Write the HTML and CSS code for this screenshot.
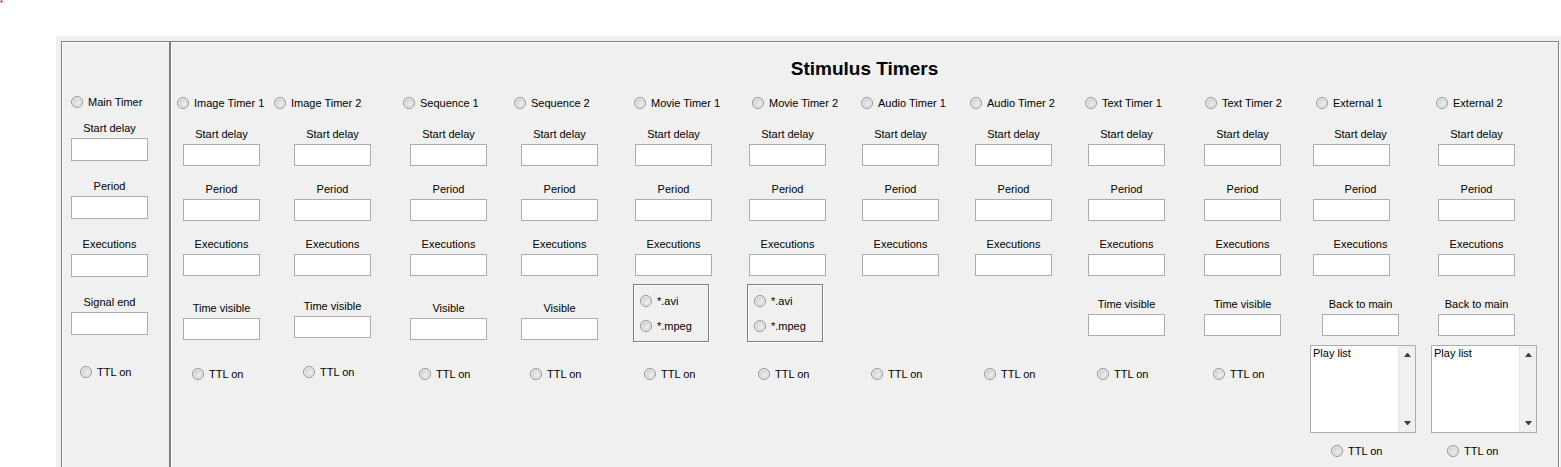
FILE: index.html
```html
<!DOCTYPE html>
<html lang="en">
<head>
<meta charset="utf-8">
<title>Stimulus Timers</title>
<link rel="stylesheet" href="styles.css">
</head>
<body>
<div class="top-strip">
  <svg class="mark" viewBox="0 0 3 3" aria-hidden="true"><path d="M0 0h3v3H0z" fill="#fbd0d0"/><path d="M0 1h3v1H0z" fill="#f08080"/><path d="M1 0h1v3H1z" fill="#f08080"/><path d="M1 1h1v1H1z" fill="#e02020"/></svg>
</div>
<div class="app">
  <section class="panel main-panel">
    <label class="radio"><input type="radio" name="main"><span>Main Timer</span></label>
    <div class="fields">
      <label class="field"><span>Start delay</span><input type="text"></label>
      <label class="field"><span>Period</span><input type="text"></label>
      <label class="field"><span>Executions</span><input type="text"></label>
      <label class="field"><span>Signal end</span><input type="text"></label>
    </div>
    <label class="radio ttl"><input type="radio" name="ttl-main"><span>TTL on</span></label>
  </section>

  <section class="panel stimulus-panel">
    <h1 class="title">Stimulus Timers</h1>
    <div class="timer-names">
      <label class="radio"><input type="radio" name="image1"><span>Image Timer 1</span></label>
      <label class="radio"><input type="radio" name="image2"><span>Image Timer 2</span></label>
      <label class="radio"><input type="radio" name="sequence1"><span>Sequence 1</span></label>
      <label class="radio"><input type="radio" name="sequence2"><span>Sequence 2</span></label>
      <label class="radio"><input type="radio" name="movie1"><span>Movie Timer 1</span></label>
      <label class="radio"><input type="radio" name="movie2"><span>Movie Timer 2</span></label>
      <label class="radio"><input type="radio" name="audio1"><span>Audio Timer 1</span></label>
      <label class="radio"><input type="radio" name="audio2"><span>Audio Timer 2</span></label>
      <label class="radio"><input type="radio" name="text1"><span>Text Timer 1</span></label>
      <label class="radio"><input type="radio" name="text2"><span>Text Timer 2</span></label>
      <label class="radio"><input type="radio" name="external1"><span>External 1</span></label>
      <label class="radio"><input type="radio" name="external2"><span>External 2</span></label>
    </div>
    <div class="timers">
      <div class="timer">
        <div class="fields">
          <label class="field"><span>Start delay</span><input type="text"></label>
          <label class="field"><span>Period</span><input type="text"></label>
          <label class="field"><span>Executions</span><input type="text"></label>
        </div>
        <div class="extra visible">
          <label class="field"><span>Time visible</span><input type="text"></label>
        </div>
        <label class="radio ttl"><input type="radio" name="ttl-image1"><span>TTL on</span></label>
      </div>
      <div class="timer">
        <div class="fields">
          <label class="field"><span>Start delay</span><input type="text"></label>
          <label class="field"><span>Period</span><input type="text"></label>
          <label class="field"><span>Executions</span><input type="text"></label>
        </div>
        <div class="extra visible raised">
          <label class="field"><span>Time visible</span><input type="text"></label>
        </div>
        <label class="radio ttl"><input type="radio" name="ttl-image2"><span>TTL on</span></label>
      </div>
      <div class="timer">
        <div class="fields">
          <label class="field"><span>Start delay</span><input type="text"></label>
          <label class="field"><span>Period</span><input type="text"></label>
          <label class="field"><span>Executions</span><input type="text"></label>
        </div>
        <div class="extra visible">
          <label class="field"><span>Visible</span><input type="text"></label>
        </div>
        <label class="radio ttl"><input type="radio" name="ttl-sequence1"><span>TTL on</span></label>
      </div>
      <div class="timer">
        <div class="fields">
          <label class="field"><span>Start delay</span><input type="text"></label>
          <label class="field"><span>Period</span><input type="text"></label>
          <label class="field"><span>Executions</span><input type="text"></label>
        </div>
        <div class="extra visible">
          <label class="field"><span>Visible</span><input type="text"></label>
        </div>
        <label class="radio ttl"><input type="radio" name="ttl-sequence2"><span>TTL on</span></label>
      </div>
      <div class="timer">
        <div class="fields">
          <label class="field"><span>Start delay</span><input type="text"></label>
          <label class="field"><span>Period</span><input type="text"></label>
          <label class="field"><span>Executions</span><input type="text"></label>
        </div>
        <div class="extra movie">
          <div class="formats">
            <label class="radio"><input type="radio" name="format1"><span>*.avi</span></label>
            <label class="radio"><input type="radio" name="format1"><span>*.mpeg</span></label>
          </div>
        </div>
        <label class="radio ttl"><input type="radio" name="ttl-movie1"><span>TTL on</span></label>
      </div>
      <div class="timer">
        <div class="fields">
          <label class="field"><span>Start delay</span><input type="text"></label>
          <label class="field"><span>Period</span><input type="text"></label>
          <label class="field"><span>Executions</span><input type="text"></label>
        </div>
        <div class="extra movie">
          <div class="formats">
            <label class="radio"><input type="radio" name="format2"><span>*.avi</span></label>
            <label class="radio"><input type="radio" name="format2"><span>*.mpeg</span></label>
          </div>
        </div>
        <label class="radio ttl"><input type="radio" name="ttl-movie2"><span>TTL on</span></label>
      </div>
      <div class="timer">
        <div class="fields">
          <label class="field"><span>Start delay</span><input type="text"></label>
          <label class="field"><span>Period</span><input type="text"></label>
          <label class="field"><span>Executions</span><input type="text"></label>
        </div>
        <div class="extra"></div>
        <label class="radio ttl"><input type="radio" name="ttl-audio1"><span>TTL on</span></label>
      </div>
      <div class="timer">
        <div class="fields">
          <label class="field"><span>Start delay</span><input type="text"></label>
          <label class="field"><span>Period</span><input type="text"></label>
          <label class="field"><span>Executions</span><input type="text"></label>
        </div>
        <div class="extra"></div>
        <label class="radio ttl"><input type="radio" name="ttl-audio2"><span>TTL on</span></label>
      </div>
      <div class="timer">
        <div class="fields">
          <label class="field"><span>Start delay</span><input type="text"></label>
          <label class="field"><span>Period</span><input type="text"></label>
          <label class="field"><span>Executions</span><input type="text"></label>
        </div>
        <div class="extra">
          <label class="field"><span>Time visible</span><input type="text"></label>
        </div>
        <label class="radio ttl"><input type="radio" name="ttl-text1"><span>TTL on</span></label>
      </div>
      <div class="timer">
        <div class="fields">
          <label class="field"><span>Start delay</span><input type="text"></label>
          <label class="field"><span>Period</span><input type="text"></label>
          <label class="field"><span>Executions</span><input type="text"></label>
        </div>
        <div class="extra">
          <label class="field"><span>Time visible</span><input type="text"></label>
        </div>
        <label class="radio ttl"><input type="radio" name="ttl-text2"><span>TTL on</span></label>
      </div>
      <div class="timer external wide">
        <div class="fields">
          <label class="field"><span>Start delay</span><input type="text"></label>
          <label class="field"><span>Period</span><input type="text"></label>
          <label class="field"><span>Executions</span><input type="text"></label>
        </div>
        <div class="extra">
          <label class="field"><span>Back to main</span><input type="text"></label>
          <div class="listbox">
            <select size="5" aria-label="Play list 1"><option>Play list</option></select>
            <div class="scrollbar" aria-hidden="true">
              <svg viewBox="0 0 7 4"><path d="M3 0h1l3 4H0z"/></svg>
              <svg viewBox="0 0 7 4"><path d="M0 0h7L4 4H3z"/></svg>
            </div>
          </div>
        </div>
        <label class="radio ttl"><input type="radio" name="ttl-external1"><span>TTL on</span></label>
      </div>
      <div class="timer external">
        <div class="fields">
          <label class="field"><span>Start delay</span><input type="text"></label>
          <label class="field"><span>Period</span><input type="text"></label>
          <label class="field"><span>Executions</span><input type="text"></label>
        </div>
        <div class="extra">
          <label class="field"><span>Back to main</span><input type="text"></label>
          <div class="listbox">
            <select size="5" aria-label="Play list 2"><option>Play list</option></select>
            <div class="scrollbar" aria-hidden="true">
              <svg viewBox="0 0 7 4"><path d="M3 0h1l3 4H0z"/></svg>
              <svg viewBox="0 0 7 4"><path d="M0 0h7L4 4H3z"/></svg>
            </div>
          </div>
        </div>
        <label class="radio ttl"><input type="radio" name="ttl-external2"><span>TTL on</span></label>
      </div>
    </div>
  </section>
</div>
</body>
</html>
```
FILE: styles.css
```css
* {
  box-sizing: border-box;
}

body {
  display: flex;
  flex-direction: column;
  min-height: 100vh;
  margin: 0;
  background: #fff;
  color: #000;
  font: 11px/14px "Liberation Sans", Arial, sans-serif;
}

.top-strip {
  height: 36px;
}

.mark {
  display: block;
  width: 3px;
  height: 3px;
}

.app {
  display: flex;
  flex: 1;
  margin-left: 56px;
  padding: 5px 2px 0 5px;
  background: #f0f0f0;
}

/* Etched frame: grey line with a white line beside it */
.panel {
  border: solid #808080;
  border-width: 1px 1px 0;
  box-shadow: 1px 0 0 #fff, inset 1px 1px 0 #fff;
}

.main-panel {
  flex: none;
  width: 109px;
  padding: 53px 9px 0;
}

.stimulus-panel {
  flex: 1;
  min-width: 0;
}

.title {
  margin: 0;
  padding: 16px 0;
  font-size: 19px;
  line-height: 22px;
  text-align: center;
}

.timer-names,
.timers {
  display: grid;
}

.timer-names {
  grid-template-columns: 97fr 129fr 111fr 120fr 118fr 109fr 109fr 115fr 120fr 111fr 120fr 122fr;
  padding-left: 6px;
}

.timers {
  grid-template-columns: 111fr 116fr 111fr 114fr 114fr 113fr 113fr 113fr 116fr 106fr 121fr 127fr;
  padding: 17px 0 8px 12px;
}

.radio {
  display: flex;
  align-items: center;
  gap: 5px;
  white-space: nowrap;
}

.radio input {
  flex: none;
  width: 12px;
  height: 12px;
  margin: 0;
  appearance: none;
  border: 1px solid #939494;
  border-radius: 50%;
  background: linear-gradient(135deg, #cdd1d6 20%, #f8f8f8 80%);
  box-shadow: inset 0 0 0 1px #f4f4f4, inset 0 0 0 2px #d4d6d9;
}

.fields {
  display: flex;
  flex-direction: column;
  gap: 16px;
}

.field {
  display: flex;
  flex-direction: column;
  align-items: center;
  gap: 3px;
  width: 77px;
}

.field input {
  width: 77px;
  height: 22px;
  margin: 0;
  padding: 0 3px;
  border: 1px solid #abadb3;
  background: #fff;
  font: inherit;
}

.ttl {
  padding-left: 9px;
}

.main-panel .fields {
  gap: 18px;
  padding: 12px 0 30px;
}

.main-panel .field input {
  height: 23px;
}

.extra {
  display: flex;
  flex-direction: column;
  gap: 9px;
  min-height: 91px;
  padding-top: 21px;
}

.visible {
  padding-top: 25px;
}

.raised {
  min-height: 89px;
  padding-top: 23px;
}

.movie {
  padding-top: 8px;
}

.formats {
  display: flex;
  flex-direction: column;
  justify-content: center;
  gap: 11px;
  width: 76px;
  height: 58px;
  margin-left: -2px;
  padding-left: 6px;
  border: 1px solid #808080;
  box-shadow: 1px 1px 0 #fff, inset 1px 1px 0 #fff;
}

.external .fields,
.external .field,
.external .ttl {
  margin-left: 7px;
}

.external .fields .field {
  margin-left: 0;
}

.external .extra {
  padding-bottom: 11px;
}

.wide .fields {
  margin-left: 3px;
}

.wide .fields .field {
  width: 95px;
}

.wide .fields .field input {
  align-self: flex-start;
}

.wide .extra .field,
.wide .ttl {
  margin-left: 12px;
}

.listbox {
  display: flex;
  width: 106px;
  height: 88px;
  border: 1px solid #abadb3;
  background: #fff;
}

.listbox select {
  flex: 1;
  min-width: 0;
  margin: 0;
  padding: 1px 0 0;
  overflow: hidden;
  border: 0;
  outline: 0;
  background: #fff;
  color: inherit;
  font: inherit;
}

.listbox option {
  min-height: 14px;
  padding: 0 2px;
}

.scrollbar {
  display: flex;
  flex-direction: column;
  align-items: center;
  justify-content: space-between;
  width: 17px;
  padding: 7px 0;
  border-left: 1px solid #e3e3e3;
  background: #f0f0f0;
}

.scrollbar svg {
  width: 7px;
  height: 4px;
  fill: #404040;
}
```
